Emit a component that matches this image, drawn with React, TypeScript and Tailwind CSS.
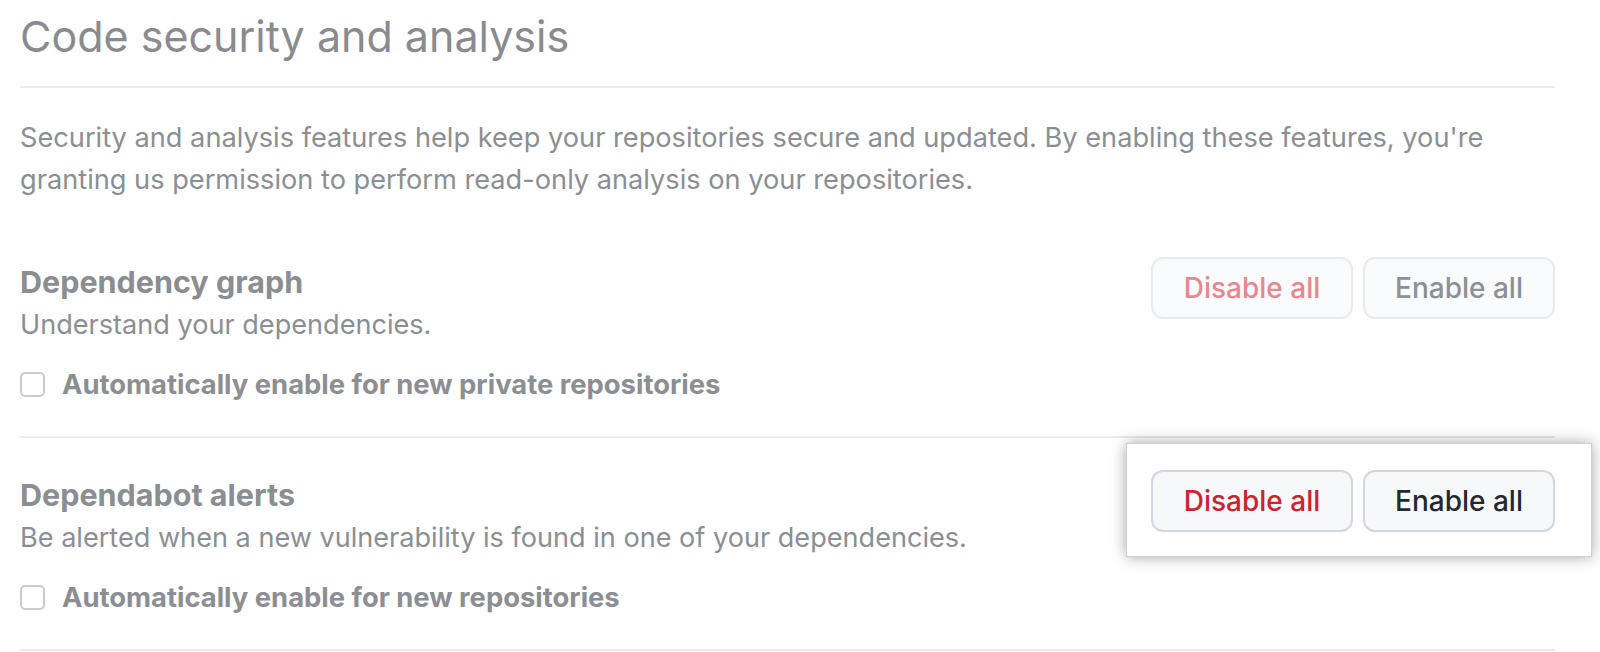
import React from 'react';

const font = { fontFamily: 'Inter, "Liberation Sans", Arial, sans-serif' };

function Btn({ label, tone, active }: { label: string; tone: 'danger' | 'default'; active?: boolean }) {
  const color = active
    ? tone === 'danger' ? 'text-[#cf222e]' : 'text-[#24292f]'
    : tone === 'danger' ? 'text-[#e8878f]' : 'text-[#8d9094]';
  const box = active ? 'bg-[#f6f8fa] border-[#d0d7de]' : 'bg-[#fafbfc] border-[#e8eaed]';
  return (
    <button className={`w-full h-[62px] rounded-[12px] border-2 text-[28px] font-medium leading-none ${box} ${color}`}>
      {label}
    </button>
  );
}

function Section({
  title,
  desc,
  check,
  highlight,
}: {
  title: string;
  desc: string;
  check: string;
  highlight?: boolean;
}) {
  const buttons = (
    <div className="flex gap-[10px]">
      <div className="w-[202px]"><Btn label="Disable all" tone="danger" active={highlight} /></div>
      <div className="w-[192px]"><Btn label="Enable all" tone="default" active={highlight} /></div>
    </div>
  );
  return (
    <div className="flex justify-between items-start">
      <div>
        <h3 className="mt-[4px] text-[30.5px] leading-[42px] font-bold text-[#8a8d91]">{title}</h3>
        <p className="mt-[2px] text-[27.1px] leading-[40px] text-[#8b8e92]">{desc}</p>
        <label className="mt-[19px] flex items-center gap-[17px]">
          <span className="w-[25px] h-[25px] rounded-[5px] border-2 border-[#c9cbce] bg-white" />
          <span className="text-[27.4px] leading-[40px] font-bold text-[#8b8e92]">{check}</span>
        </label>
      </div>
      {highlight ? (
        <div className="relative z-10 -mt-[27px] -ml-[25px] -mr-[37px] bg-white border border-[#cfcfcf] shadow-[0_0_14px_rgba(0,0,0,0.35)] pt-[26px] pb-[24px] pl-[24px] pr-[36px]">
          {buttons}
        </div>
      ) : (
        buttons
      )}
    </div>
  );
}

export default function App() {
  return (
    <div className="w-[1600px] h-[652px] bg-white overflow-hidden" style={font}>
      <div className="w-[1555px] pl-[20px]">
        <h2 className="pt-[8px] pb-[22px] text-[43px] leading-[56px] font-normal text-[#898b8f] border-b-2 border-[#e9ebee]">
          Code security and analysis
        </h2>
        <p className="mt-[29px] text-[27.2px] leading-[42px] text-[#8b8e92]">
          Security and analysis features help keep your repositories secure and updated. By enabling these features, you're granting us permission to perform read-only analysis on your repositories.
        </p>
        <div className="mt-[56px] pb-[32px] border-b-2 border-[#e9ebee]">
          <Section
            title="Dependency graph"
            desc="Understand your dependencies."
            check="Automatically enable for new private repositories"
          />
        </div>
        <div className="pt-[32px] pb-[32px] border-b-2 border-[#e9ebee]">
          <Section
            title="Dependabot alerts"
            desc="Be alerted when a new vulnerability is found in one of your dependencies."
            check="Automatically enable for new repositories"
            highlight
          />
        </div>
      </div>
    </div>
  );
}
